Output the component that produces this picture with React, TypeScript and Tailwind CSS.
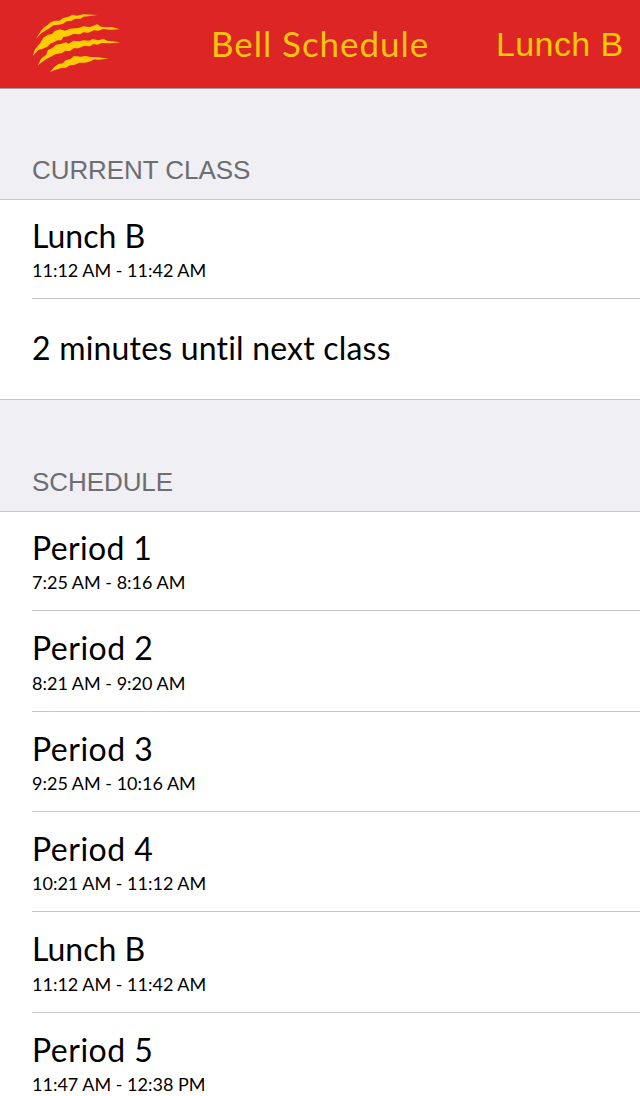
type Entry = { name: string; time: string; row: string; gap: string; tracking: string };

const schedule: Entry[] = [
  { name: "Period 1", time: "7:25 AM - 8:16 AM", row: "h-[99px] pt-5", gap: "pt-2", tracking: "tracking-[0.35px]" },
  { name: "Period 2", time: "8:21 AM - 9:20 AM", row: "h-[101px] pt-[21px]", gap: "pt-[9px]", tracking: "tracking-[0.5px]" },
  { name: "Period 3", time: "9:25 AM - 10:16 AM", row: "h-[100px] pt-[21px]", gap: "pt-2", tracking: "tracking-[0.5px]" },
  { name: "Period 4", time: "10:21 AM - 11:12 AM", row: "h-[100px] pt-[21px]", gap: "pt-2", tracking: "tracking-[0.5px]" },
  { name: "Lunch B", time: "11:12 AM - 11:42 AM", row: "h-[101px] pt-[21px]", gap: "pt-[9px]", tracking: "tracking-normal" },
  { name: "Period 5", time: "11:47 AM - 12:38 PM", row: "h-[101px] pt-[21px]", gap: "pt-2", tracking: "tracking-[0.5px]" },
];

function ClawMark() {
  return (
    <svg width="90" height="60" viewBox="36 39 270 180" fill="#ffcc00">
      <path d="M48 116L62 94L72 82L82 76L92 67L104 62L118 62L130 54L145 50L158 44L170 47L190 43L232 45L205 49L190 50L182 56L165 56L155 62L140 64L128 72L115 74L100 76L88 85L75 92L64 100Z" />
      <path d="M38 168L45 148L60 130L70 113L84 104L96 102L104 93L120 88L135 92L150 86L175 84L190 79L210 81L232 73L243 80L258 82L275 81L299 88L270 89L250 87L235 92L222 91L205 98L190 97L180 103L160 102L145 109L130 111L124 121L112 121L102 127L92 130L82 140L68 146L55 150Z" />
      <path d="M53 197L64 175L78 165L84 150L98 143L108 134L122 132L138 127L146 131L160 122L178 124L190 121L208 122L218 117L236 121L250 116L262 122L301 127L270 130L245 129L232 134L220 132L210 139L192 138L175 145L160 145L150 153L136 152L125 160L108 162L92 170L78 178L66 186Z" />
      <path d="M90 216L102 202L115 192L128 190L137 181L150 178L162 168L182 170L195 168L212 171L235 172L265 176L235 179L222 178L212 184L195 188L178 188L165 194L150 196L138 203L122 205L105 210Z" />
    </svg>
  );
}

function SectionHeader({ title }: { title: string }) {
  return (
    <h2 className="flex items-end border-b border-[#c8c7cc] bg-[#efeff4] pb-[14px] pl-8 font-['Liberation_Sans'] text-[26px] leading-[30px] tracking-[-0.07px] text-[#6d6d72]">
      {title}
    </h2>
  );
}

export default function App() {
  return (
    <main className="flex h-[1096px] w-[640px] flex-col overflow-hidden bg-white font-['Lato',sans-serif] text-black [font-variant-ligatures:none]">
      <header className="flex h-[89px] shrink-0 border-b border-[#a8a2a5] bg-[#dd2525] text-[#ffcc00]">
        <div className="w-[211px] pt-[13px] pl-8"><ClawMark /></div>
        <h1 className="w-[285px] pt-[23px] text-[35px] leading-10 tracking-[0.95px] text-[#f5c40f]">Bell Schedule</h1>
        <span className="pt-6 font-['Liberation_Sans'] text-[34px] leading-10 tracking-[0.4px]">Lunch B</span>
      </header>
      <section>
        <div className="grid h-[111px]"><SectionHeader title="CURRENT CLASS" /></div>
        <div className="ml-8 h-[99px] border-b border-[#c8c7cc] pt-5">
          <p className="text-[32px] leading-8">Lunch B</p>
          <p className="pt-2 text-[18px] leading-5">11:12 AM - 11:42 AM</p>
        </div>
        <div className="h-[101px] border-b border-[#c8c7cc] pt-[33px] pl-8">
          <p className="text-[32px] leading-8 tracking-[0.19px]">2 minutes until next class</p>
        </div>
      </section>
      <section>
        <div className="grid h-[112px]"><SectionHeader title="SCHEDULE" /></div>
        <ul className="pl-8">
          {schedule.map((e) => (
            <li key={e.name} className={`border-b border-[#c8c7cc] ${e.row}`}>
              <p className={`text-[32px] leading-8 ${e.tracking}`}>{e.name}</p>
              <p className={`text-[18px] leading-5 ${e.gap}`}>{e.time}</p>
            </li>
          ))}
        </ul>
      </section>
    </main>
  );
}
